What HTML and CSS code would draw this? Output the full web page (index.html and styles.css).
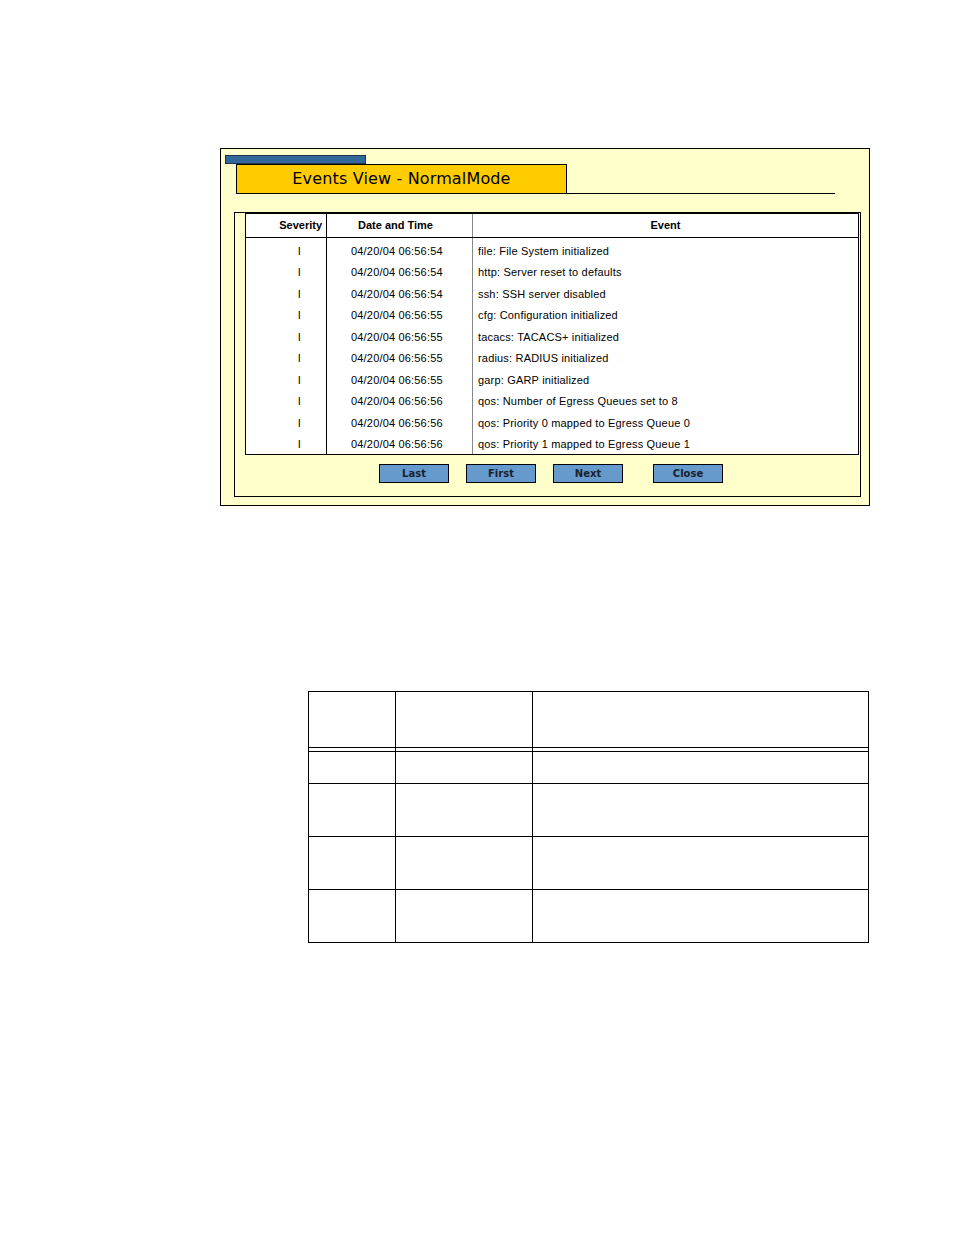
FILE: index.html
```html
<!DOCTYPE html>
<html>
<head>
<meta charset="utf-8">
<title>Events View - NormalMode</title>
<link rel="stylesheet" href="styles.css">
</head>
<body>
<div class="page">
  <div class="panel">
    <div class="tab-bar"></div>
    <div class="title-row">
      <div class="title-box">Events View - NormalMode</div>
    </div>
    <div class="inner">
      <div class="evtable">
        <div class="ev-head">
          <div class="h sev">Severity</div>
          <div class="h dt">Date and Time</div>
          <div class="h ev">Event</div>
        </div>
        <div class="ev-body">
          <div class="col sev">
            <div>I</div><div>I</div><div>I</div><div>I</div><div>I</div>
            <div>I</div><div>I</div><div>I</div><div>I</div><div>I</div>
          </div>
          <div class="col dt">
            <div>04/20/04 06:56:54</div>
            <div>04/20/04 06:56:54</div>
            <div>04/20/04 06:56:54</div>
            <div>04/20/04 06:56:55</div>
            <div>04/20/04 06:56:55</div>
            <div>04/20/04 06:56:55</div>
            <div>04/20/04 06:56:55</div>
            <div>04/20/04 06:56:56</div>
            <div>04/20/04 06:56:56</div>
            <div>04/20/04 06:56:56</div>
          </div>
          <div class="col ev">
            <div>file: File System initialized</div>
            <div>http: Server reset to defaults</div>
            <div>ssh: SSH server disabled</div>
            <div>cfg: Configuration initialized</div>
            <div>tacacs: TACACS+ initialized</div>
            <div>radius: RADIUS initialized</div>
            <div>garp: GARP initialized</div>
            <div>qos: Number of Egress Queues set to 8</div>
            <div>qos: Priority 0 mapped to Egress Queue 0</div>
            <div>qos: Priority 1 mapped to Egress Queue 1</div>
          </div>
        </div>
      </div>
      <div class="buttons">
        <div class="btn">Last</div>
        <div class="btn">First</div>
        <div class="btn">Next</div>
        <div class="btn btn-close">Close</div>
      </div>
    </div>
  </div>

  <div class="grid-table">
    <div class="g-row g-head"><div></div><div></div><div></div></div>
    <div class="g-row g-spacer"><div></div><div></div><div></div></div>
    <div class="g-row g-r1"><div></div><div></div><div></div></div>
    <div class="g-row g-r2"><div></div><div></div><div></div></div>
    <div class="g-row g-r2"><div></div><div></div><div></div></div>
    <div class="g-row g-r2"><div></div><div></div><div></div></div>
  </div>
</div>
</body>
</html>
```

FILE: styles.css
```css
html, body {
  margin: 0;
  padding: 0;
  background: #ffffff;
}

.page {
  padding-top: 148px;
  font-family: "Liberation Sans", Arial, sans-serif;
  color: #000;
}

.panel {
  box-sizing: border-box;
  margin-left: 220px;
  width: 650px;
  height: 358px;
  border: 1px solid #000;
  background: #ffffcc;
  padding-top: 6px;
}

.tab-bar {
  box-sizing: border-box;
  margin-left: 4px;
  width: 141px;
  height: 9px;
  background: #336699;
  border: 1px solid #1d3550;
}

.title-row {
  display: flex;
  margin-left: 15px;
  width: 599px;
  border-bottom: 1px solid #000;
}

.title-box {
  box-sizing: border-box;
  width: 331px;
  height: 29px;
  border: 1px solid #000;
  border-bottom: none;
  background: #ffcc00;
  font-family: "DejaVu Sans", Verdana, sans-serif;
  font-size: 16px;
  line-height: 28px;
  text-align: center;
  letter-spacing: 0.15px;
}

.inner {
  box-sizing: border-box;
  margin-left: 13px;
  margin-top: 18px;
  width: 627px;
  height: 285px;
  border: 1px solid #000;
}

.evtable {
  box-sizing: border-box;
  margin-left: 10px;
  width: 614px;
  border: 1px solid #000;
  background: #ffffff;
}

.ev-head {
  display: grid;
  grid-template-columns: 81px 146px 1fr;
  height: 24px;
  border-bottom: 1px solid #000;
  box-sizing: border-box;
  font-weight: bold;
  font-size: 11px;
  line-height: 23px;
}

.h.sev {
  border-right: 1px solid #000;
  text-align: right;
  padding-right: 4px;
}

.h.dt {
  border-right: 1px solid #888;
  padding-left: 31px;
}

.h.ev {
  text-align: center;
}

.ev-body {
  display: grid;
  grid-template-columns: 81px 146px 1fr;
  height: 216px;
  overflow: hidden;
  font-size: 11px;
  letter-spacing: 0.18px;
}

.col {
  padding-top: 2.5px;
  line-height: 21.5px;
  white-space: nowrap;
}

.col.sev {
  border-right: 1px solid #000;
  text-align: right;
  padding-right: 25px;
}

.col.dt {
  border-right: 1px solid #888;
  padding-left: 24px;
}

.col.ev {
  padding-left: 5px;
}

.buttons {
  display: flex;
  margin-top: 9px;
  margin-left: 144px;
  gap: 17px;
}

.btn {
  box-sizing: border-box;
  width: 70px;
  height: 19px;
  border: 1px solid #000;
  background: #6699cc;
  font-family: "DejaVu Sans", Verdana, sans-serif;
  font-size: 10px;
  font-weight: bold;
  line-height: 17px;
  text-align: center;
  color: #1a1f2e;
}

.btn-close {
  margin-left: 13px;
}

.grid-table {
  box-sizing: border-box;
  margin-top: 185px;
  margin-left: 308px;
  width: 561px;
  border: 1px solid #000;
  border-bottom: none;
}

.g-row {
  display: grid;
  grid-template-columns: 87px 137px 1fr;
  border-bottom: 1px solid #000;
}

.g-row > div {
  border-right: 1px solid #000;
}

.g-row > div:last-child {
  border-right: none;
}

.g-head { height: 56px; }
.g-spacer { height: 4px; }
.g-r1 { height: 32px; }
.g-r2 { height: 53px; }

.g-row { box-sizing: border-box; }
```
